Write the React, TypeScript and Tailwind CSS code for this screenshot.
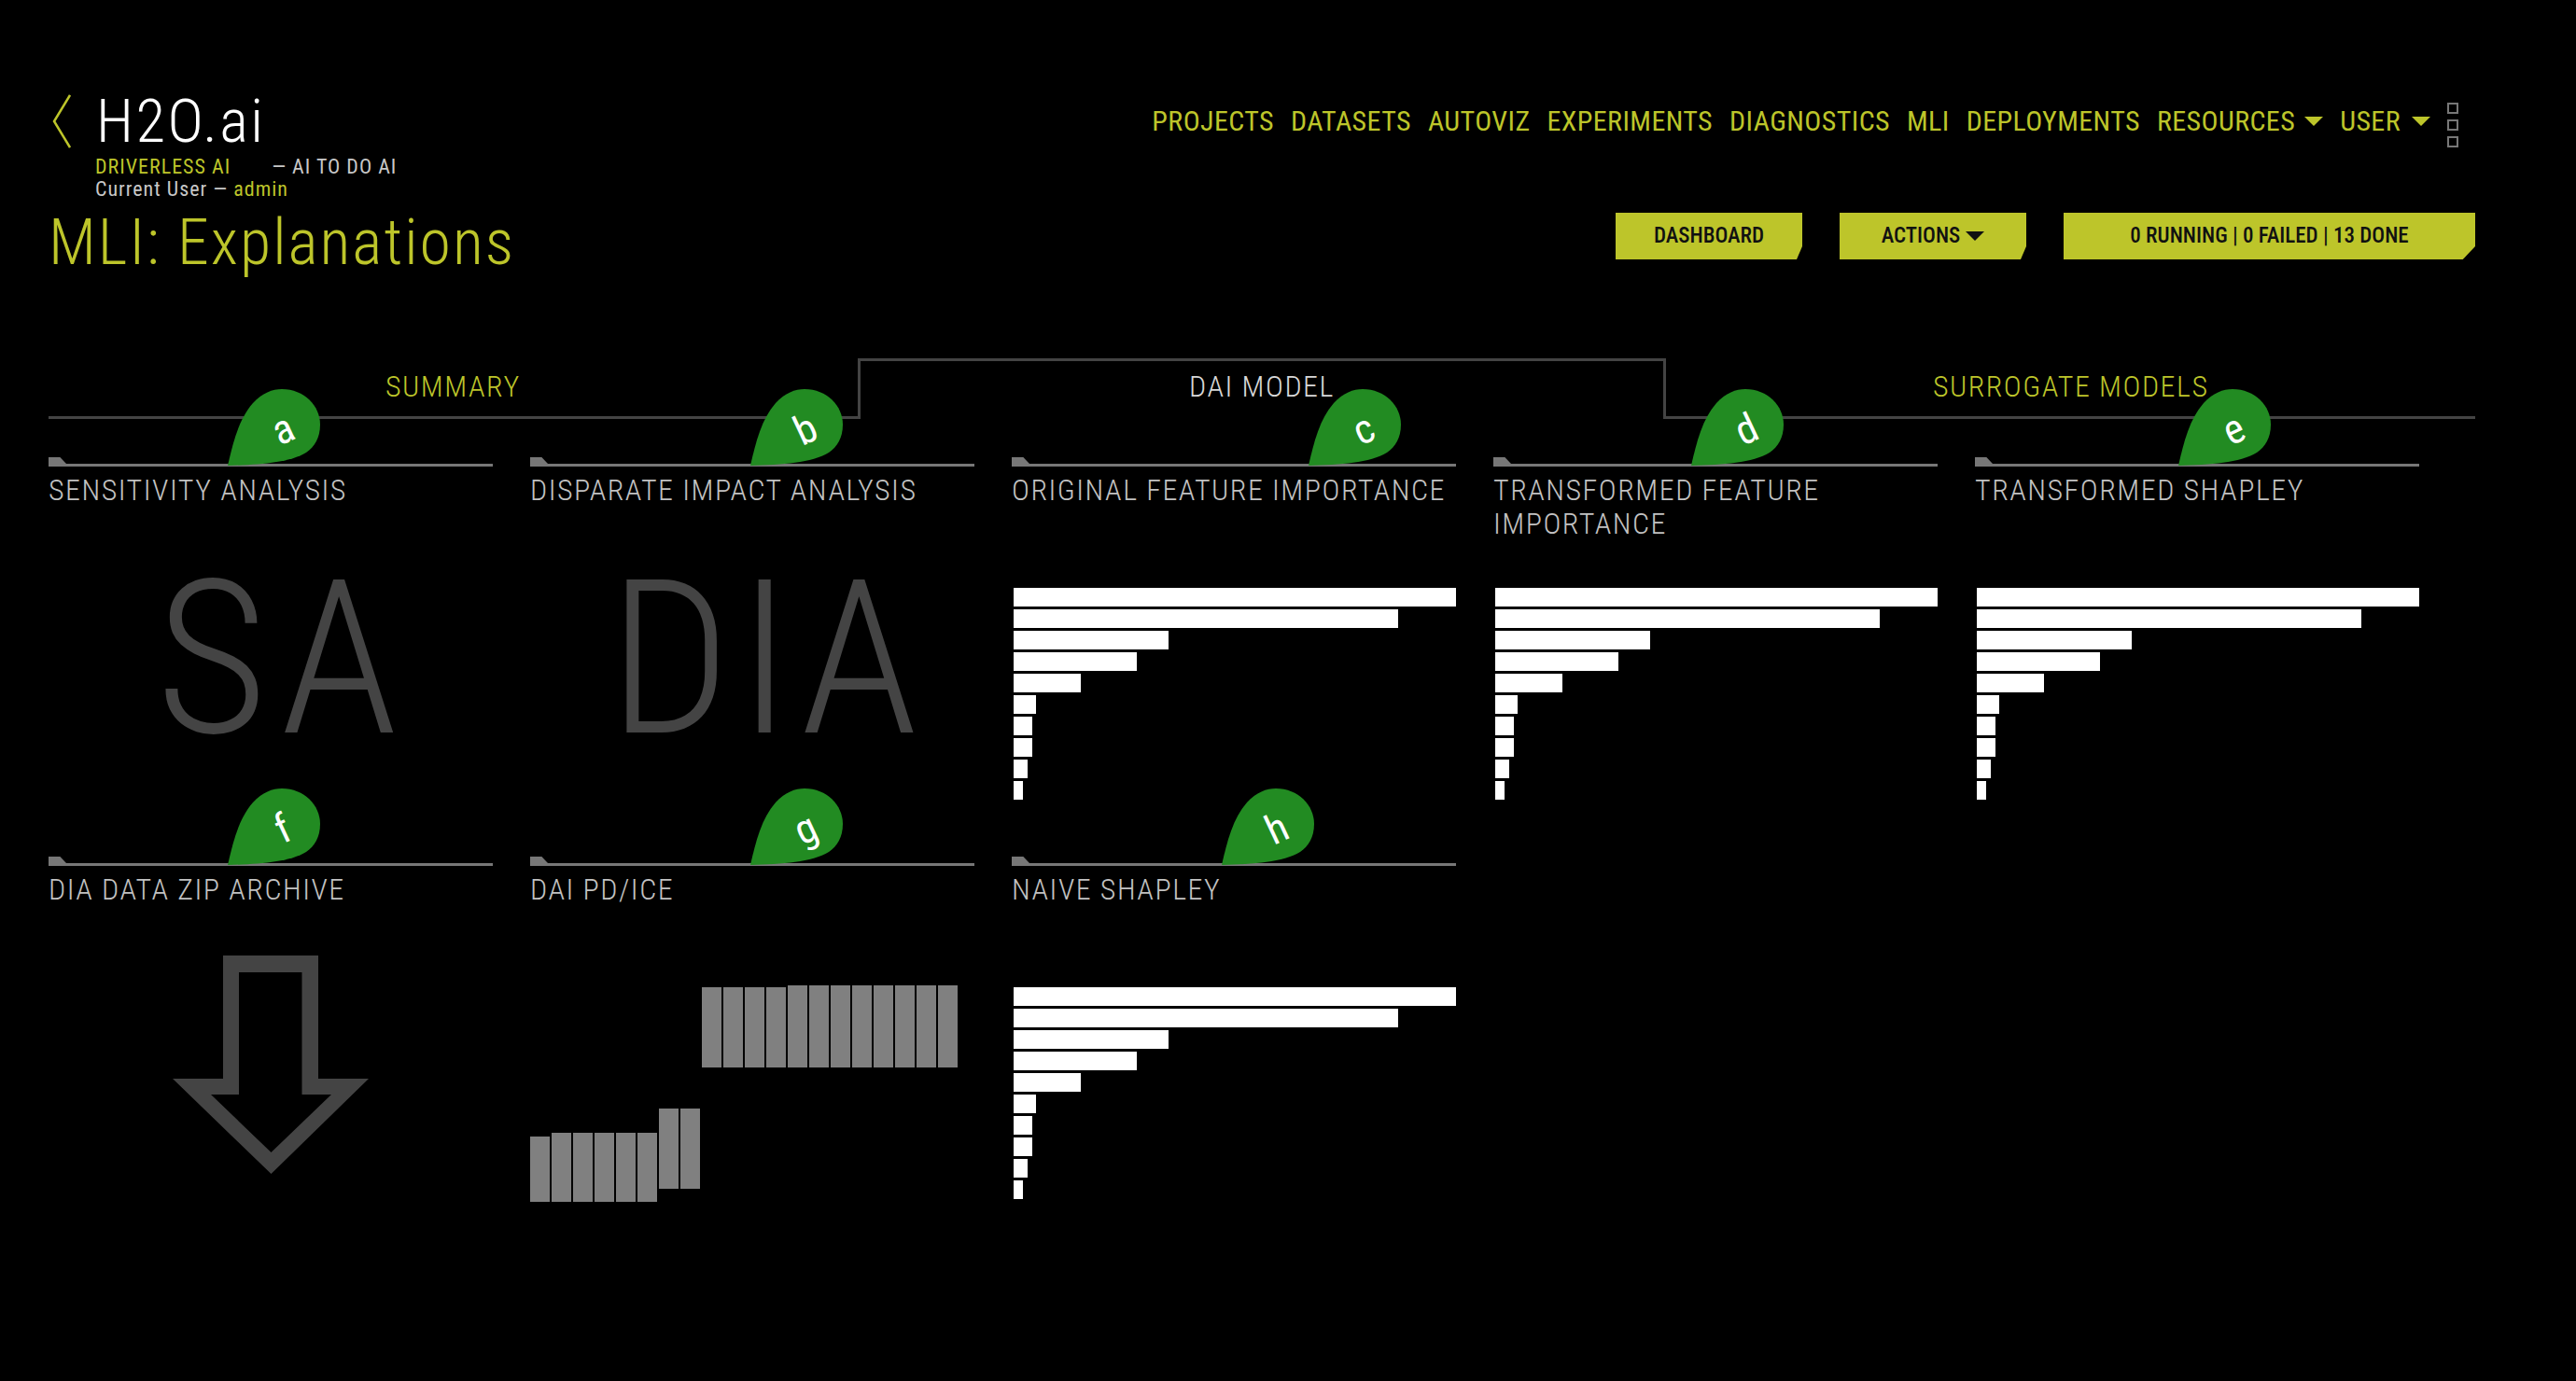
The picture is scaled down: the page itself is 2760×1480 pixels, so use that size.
const narrow = "font-['Roboto',sans-serif] font-light [font-stretch:75%]";

const Bars = () => {
  const widths = ["w-[474px]", "w-[412px]", "w-[166px]", "w-[132px]", "w-[72px]", "w-[24px]", "w-[20px]", "w-[20px]", "w-[15px]", "w-[10px]"];
  return (
    <div className="flex flex-col gap-[3px] pl-[2px] pt-[2px]">
      {widths.map((w, i) => (
        <div key={i} className={`h-[20px] bg-white ${w}`} />
      ))}
    </div>
  );
};

const Arrow = () => (
  <svg width="476" height="236" viewBox="0 0 476 236" className="block -mt-[33px]">
    <path
      fillRule="evenodd"
      fill="#444444"
      d="M187 1H289V133H343L238.500 235L133 133H187ZM204 19V150H174L238.500 212L303 150H271.500V19Z"
    />
  </svg>
);

const PdIce = () => {
  const tops = [162, 158, 158, 158, 158, 158, 132, 132, 2, 2, 2, 2, 0, 0, 0, 0, 0, 0, 0, 0];
  const bottoms = [232, 232, 232, 232, 232, 232, 218, 218, 88, 88, 88, 88, 88, 88, 88, 88, 88, 88, 88, 88];
  return (
    <svg width="476" height="236" viewBox="0 0 476 236" className="block">
      {tops.map((t, i) => (
        <rect key={i} x={i * 23} y={t} width="21" height={bottoms[i] - t} fill="#808080" />
      ))}
    </svg>
  );
};

const Big = ({ text, cls }: { text: string; cls: string }) => (
  <div className={`-mt-[21px] text-[230px] leading-[200px] font-[350] text-[#444444] font-['Roboto',sans-serif] whitespace-nowrap ${cls}`}>
    {text}
  </div>
);

const Drop = ({ letter, left }: { letter: string; left: string }) => (
  <div className={`absolute top-[-73px] w-[100px] h-[82px] ${left}`}>
    <svg width="100" height="82" viewBox="0 0 100 82" className="absolute inset-0">
      <path
        fill="#228b22"
        d="M0 82C6 56 12 32 27 15C37 4 48 0 58 0C82 0 99 18 99 38C99 52 93 62 84 68C66 79 34 81 0 82Z"
      />
    </svg>
    <span className="absolute left-[39px] top-[18px] w-[40px] h-[50px] text-center text-[44px] leading-[50px] text-white font-['Roboto',sans-serif] font-normal [font-stretch:85%] -rotate-[25deg]">
      {letter}
    </span>
  </div>
);

const Card = ({ title, left, letter, children }: { title: string; left: string; letter: string; children: React.ReactNode }) => (
  <div className="relative h-[428px]">
    <div className="relative h-[10px]">
      <div className="h-[7px] w-[19px] bg-[#777777] [clip-path:polygon(0_0,65%_0,100%_100%,0_100%)]" />
      <div className="h-[3px] bg-[#777777]" />
      <Drop letter={letter} left={left} />
    </div>
    <h3 className={`mt-[7px] h-[121px] text-[32px] leading-[36px] tracking-[1.5px] text-[#c2c2c2] ${narrow}`}>{title}</h3>
    {children}
  </div>
);

const Tri = ({ cls }: { cls: string }) => (
  <span className={`inline-block w-0 h-0 border-x-[10px] border-x-transparent border-t-[10px] ${cls}`} />
);

export default function App() {
  const nav = ["PROJECTS", "DATASETS", "AUTOVIZ", "EXPERIMENTS", "DIAGNOSTICS", "MLI", "DEPLOYMENTS"];
  const btn = `h-[50px] flex items-center justify-center gap-[6px] bg-[#bdc52a] text-[#111111] text-[23px] font-['Roboto',sans-serif] font-medium [font-stretch:75%] [clip-path:polygon(0_0,100%_0,100%_72%,97%_100%,0_100%)]`;
  return (
    <div className={`min-h-[1480px] bg-black pl-[52px] pr-[108px] pt-[100px] ${narrow}`}>
      <header className="relative h-[284px]">
        <div className="flex justify-between items-start">
          <div className="flex flex-col">
            <div className="flex items-center h-[60px] pl-[4px]">
              <svg width="20" height="58" viewBox="0 0 20 58" className="mr-[27px]">
                <path d="M19 1L2 29L19 57" fill="none" stroke="#bdc52a" strokeWidth="2.500" />
              </svg>
              <span className="text-[65px] leading-[60px] tracking-[2.500px] text-white">H2O.ai</span>
            </div>
            <div className="pl-[50px] mt-[7px] text-[22px] leading-[24px] tracking-[1px] font-normal text-[#c8c8c8]">
              <div>
                <span className="text-[#bdc52a] mr-[44px]">DRIVERLESS AI</span>— AI TO DO AI
              </div>
              <div>
                Current User — <span className="text-[#bdc52a]">admin</span>
              </div>
            </div>
            <h1 className="mt-[9px] text-[68px] leading-[72px] tracking-[2px] font-light text-[#bdc52a]">MLI: Explanations</h1>
          </div>
          <div className="flex flex-col items-end">
            <nav className="flex items-start gap-[18px] pr-[18px] text-[30px] leading-[36px] tracking-[0.400px] font-normal text-[#bdc52a] pt-[12px]">
              {nav.map((n) => (
                <span key={n}>{n}</span>
              ))}
              <span className="flex items-center gap-[10px]">
                RESOURCES <Tri cls="border-t-[#bdc52a]" />
              </span>
              <span className="flex items-center gap-[12px]">
                USER <Tri cls="border-t-[#bdc52a]" />
              </span>
              <span className="flex flex-col gap-[6px] -mt-[2px]">
                <i className="block w-[12px] h-[12px] border-2 border-[#777777]" />
                <i className="block w-[12px] h-[12px] border-2 border-[#777777]" />
                <i className="block w-[12px] h-[12px] border-2 border-[#777777]" />
              </span>
            </nav>
            <div className="flex gap-[40px] mt-[70px]">
              <button className={`${btn} w-[200px]`}>DASHBOARD</button>
              <button className={`${btn} w-[200px]`}>
                ACTIONS <Tri cls="border-x-[6px] border-t-[7px] border-t-[#111111]" />
              </button>
              <button className={`${btn} w-[441px]`}>0 RUNNING | 0 FAILED | 13 DONE</button>
            </div>
          </div>
        </div>
      </header>

      <div className="grid grid-cols-3 h-[65px] text-[32px] leading-[36px] tracking-[1.5px] text-center">
        <div className="border-b-[3px] border-[#444444] text-[#bdc52a] pt-[12px]">SUMMARY</div>
        <div className="border-t-[3px] border-x-[3px] border-[#444444] text-[#d8d8d8] pt-[9px]">DAI MODEL</div>
        <div className="border-b-[3px] border-[#444444] text-[#bdc52a] pt-[12px]">SURROGATE MODELS</div>
      </div>

      <main className="grid grid-cols-[repeat(5,476px)] gap-x-[40px] mt-[41px]">
        <Card title="SENSITIVITY ANALYSIS" left="left-[192px]" letter="a">
          <Big text="SA" cls="pl-[115px] tracking-[14px] [font-stretch:86%]" />
        </Card>
        <Card title="DISPARATE IMPACT ANALYSIS" left="left-[236px]" letter="b">
          <Big text="DIA" cls="pl-[84px] tracking-[8px] [font-stretch:80%]" />
        </Card>
        <Card title="ORIGINAL FEATURE IMPORTANCE" left="left-[318px]" letter="c">
          <Bars />
        </Card>
        <Card title="TRANSFORMED FEATURE IMPORTANCE" left="left-[212px]" letter="d">
          <Bars />
        </Card>
        <Card title="TRANSFORMED SHAPLEY" left="left-[218px]" letter="e">
          <Bars />
        </Card>
        <Card title="DIA DATA ZIP ARCHIVE" left="left-[192px]" letter="f">
          <Arrow />
        </Card>
        <Card title="DAI PD/ICE" left="left-[236px]" letter="g">
          <PdIce />
        </Card>
        <Card title="NAIVE SHAPLEY" left="left-[225px]" letter="h">
          <Bars />
        </Card>
      </main>
    </div>
  );
}
